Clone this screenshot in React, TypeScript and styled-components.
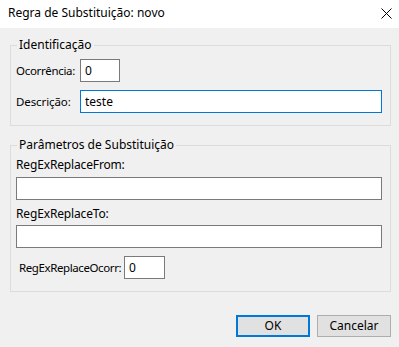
import React from "react";
import styled, { createGlobalStyle } from "styled-components";

const GlobalStyle = createGlobalStyle`
  html, body { margin: 0; padding: 0; background: #f0f0f0; }
  body { font-family: "Noto Sans", "Open Sans", Arial, sans-serif; font-size: 12px; color: #000; }
  * { box-sizing: border-box; }
`;

const Window = styled.div`
  width: 399px;
  height: 347px;
  background: #f0f0f0;
  display: flex;
  flex-direction: column;
  overflow: hidden;
`;

const TitleBar = styled.div`
  height: 28px;
  flex: none;
  background: #ffffff;
  display: flex;
  align-items: center;
  justify-content: space-between;
  padding: 0 7px 2px 8px;
`;

const Title = styled.span`
  font-size: 12px;
  line-height: 16px;
  color: #000;
`;

const CloseButton = styled.button`
  width: 11px;
  height: 11px;
  padding: 0;
  border: none;
  background: transparent;
  display: flex;
  align-items: center;
  justify-content: center;
`;

const Body = styled.div`
  flex: 1;
  display: flex;
  flex-direction: column;
  padding: 9px 8px 0 10px;
`;

const Group = styled.fieldset<{ $gapTop?: number; $pt?: number }>`
  margin: ${(p) => p.$gapTop ?? 0}px 0 0 0;
  padding: ${(p) => p.$pt ?? 6}px 8px 12px 5px;
  border: 1px solid #dcdcdc;
  min-width: 0;
  display: flex;
  flex-direction: column;
`;

const Legend = styled.legend`
  font-size: 12px;
  line-height: 16px;
  padding: 0 2px;
  margin-left: 1px;
  color: #000;
`;

const Row = styled.div<{ $mt?: number; $indent?: number }>`
  display: flex;
  align-items: center;
  margin-top: ${(p) => p.$mt ?? 0}px;
  padding-left: ${(p) => p.$indent ?? 0}px;
`;

const RowLabel = styled.label<{ $w: number; $tight?: number }>`
  width: ${(p) => p.$w}px;
  flex: none;
  font-size: 11.5px;
  line-height: 16px;
  white-space: nowrap;
  letter-spacing: ${(p) => p.$tight ?? 0}px;
`;

const FieldLabel = styled.label<{ $mt?: number }>`
  display: block;
  line-height: 16px;
  margin-top: ${(p) => p.$mt ?? 0}px;
  white-space: nowrap;
  letter-spacing: -0.15px;
`;

const TextBox = styled.input<{ $w?: number; $grow?: boolean; $focused?: boolean; $mt?: number }>`
  display: block;
  width: ${(p) => (p.$w ? `${p.$w}px` : p.$grow ? "auto" : "100%")};
  flex: ${(p) => (p.$grow ? "1 1 0" : "none")};
  min-width: 0;
  height: 23px;
  margin: ${(p) => p.$mt ?? 0}px 0 0 0;
  padding: 0 4px 1px 4px;
  border: 1px solid ${(p) => (p.$focused ? "#0078d7" : "#7a7a7a")};
  background: #fff;
  font-family: inherit;
  font-size: 12px;
  color: #000;
  outline: none;
  border-radius: 0;
`;

const ButtonBar = styled.div`
  display: flex;
  justify-content: flex-end;
  gap: 7px;
  margin-top: 23px;
`;

const DialogButton = styled.button<{ $default?: boolean }>`
  width: 74px;
  height: 22px;
  padding: 0 0 1px 0;
  background: #e1e1e1;
  border: ${(p) => (p.$default ? "2px solid #0078d7" : "1px solid #adadad")};
  font-family: inherit;
  font-size: 12px;
  color: #000;
  border-radius: 0;
`;

export default function App() {
  return (
    <>
      <GlobalStyle />
      <Window>
        <TitleBar>
          <Title>Regra de Substituição: novo</Title>
          <CloseButton aria-label="Fechar">
            <svg width="11" height="11" viewBox="0 0 11 11">
              <path d="M0.5 0.5 L10.5 10.5 M10.5 0.5 L0.5 10.5" stroke="#000" strokeWidth="1" />
            </svg>
          </CloseButton>
        </TitleBar>
        <Body>
          <Group>
            <Legend>Identificação</Legend>
            <Row>
              <RowLabel $w={64} $tight={-0.3}>Ocorrência:</RowLabel>
              <TextBox $w={40} defaultValue="0" />
            </Row>
            <Row $mt={8}>
              <RowLabel $w={64} $tight={-0.1}>Descrição:</RowLabel>
              <TextBox $grow $focused defaultValue="teste" />
            </Row>
          </Group>
          <Group $gapTop={11} $pt={4}>
            <Legend>Parâmetros de Substituição</Legend>
            <FieldLabel>RegExReplaceFrom:</FieldLabel>
            <TextBox $mt={4} />
            <FieldLabel $mt={6}>RegExReplaceTo:</FieldLabel>
            <TextBox $mt={3} />
            <Row $mt={8} $indent={3}>
              <RowLabel $w={105} $tight={-0.4}>RegExReplaceOcorr:</RowLabel>
              <TextBox $w={41} defaultValue="0" />
            </Row>
          </Group>
          <ButtonBar>
            <DialogButton $default>OK</DialogButton>
            <DialogButton>Cancelar</DialogButton>
          </ButtonBar>
        </Body>
      </Window>
    </>
  );
}
